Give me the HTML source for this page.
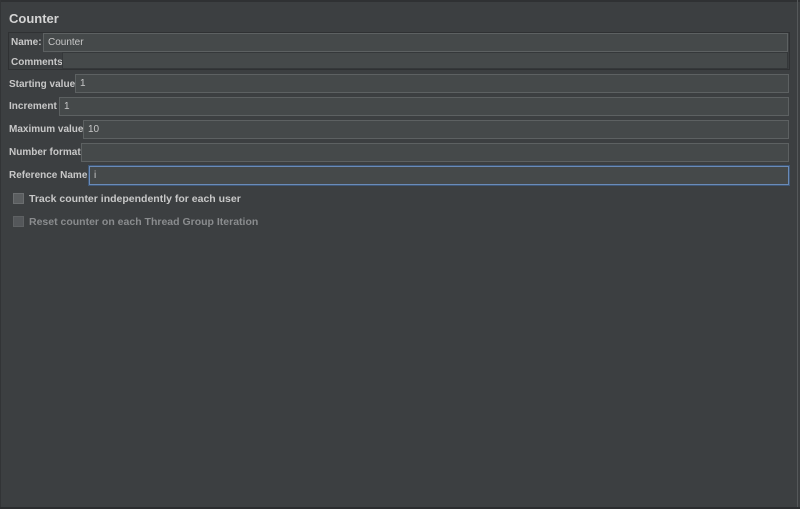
<!DOCTYPE html>
<html><head><style>
body{margin:0;width:800px;height:509px;background:#3c3f41;font-family:"Liberation Sans",Arial,sans-serif;overflow:hidden;position:relative}
.t{position:absolute;left:9px;top:11px;font-size:13px;font-weight:bold;color:#d4d4d4}
.l{position:absolute;font-size:10px;font-weight:bold;color:#c8c8c8}
.f{position:absolute;background:#45494a;border:1px solid #5d6162;box-sizing:border-box;color:#c8c8c8;font-size:10px;padding:3px 4px;height:19px;right:11px}
.cb{position:absolute;left:13px;width:11px;height:11px;background:#5b5e60;border:1px solid #6b6e70;box-sizing:border-box}
</style></head><body>
<div style="position:absolute;left:0;top:0;width:800px;height:2px;background:#2f3133"></div>
<div style="position:absolute;right:2px;top:0;width:1px;height:509px;background:#55585a"></div>
<div style="position:absolute;left:0;top:0;width:1px;height:509px;background:#323436"></div>
<div style="position:absolute;left:0;bottom:0;width:800px;height:2px;background:#2b2d2f"></div>
<div class="t">Counter</div>
<div style="position:absolute;left:8px;top:32px;width:782px;height:38px;border:1px solid #2f3133;box-sizing:border-box"></div>
<div class="l" style="left:11px;top:37px">Name:</div>
<div class="f" style="left:43px;top:33px;right:12px">Counter</div>
<div class="l" style="left:11px;top:57px">Comments:</div>
<div class="f" style="left:62px;top:52px;right:12px;height:17px;border-color:#35383a"></div>
<div class="l" style="left:9px;top:79px">Starting value</div>
<div class="f" style="left:75px;top:74px">1</div>
<div class="l" style="left:9px;top:101px">Increment</div>
<div class="f" style="left:59px;top:97px">1</div>
<div class="l" style="left:9px;top:124px">Maximum value</div>
<div class="f" style="left:83px;top:120px">10</div>
<div class="l" style="left:9px;top:147px">Number format</div>
<div class="f" style="left:81px;top:143px"></div>
<div class="l" style="left:9px;top:170px">Reference Name</div>
<div class="f" style="left:89px;top:166px;border:1px solid #6a8bb8;box-shadow:0 0 0 1px #3f5878">i</div>
<div class="cb" style="top:193px"></div>
<div class="l" style="left:29px;top:193px;font-size:10.5px">Track counter independently for each user</div>
<div class="cb" style="top:216px;background:#54575a;border-color:#5e6163"></div>
<div class="l" style="left:29px;top:216px;font-size:10.5px;color:#8a8c8e">Reset counter on each Thread Group Iteration</div>
</body></html>
